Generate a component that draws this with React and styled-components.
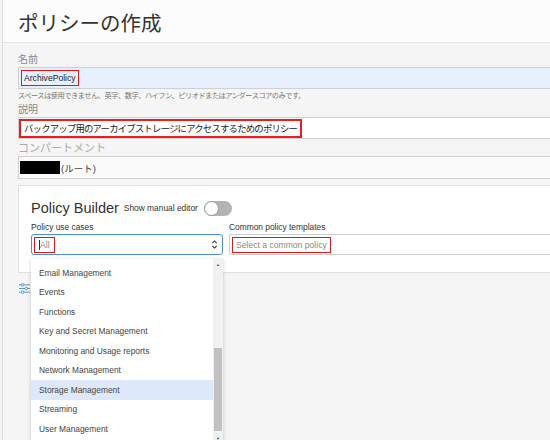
import React from 'react';
import styled, { createGlobalStyle } from 'styled-components';

const GlobalStyle = createGlobalStyle`
  html, body {
    margin: 0;
    padding: 0;
    width: 550px;
    height: 440px;
    overflow: hidden;
    background: #f5f5f5;
  }
  body {
    font-family: "Liberation Sans", Arial, "Noto Sans CJK JP", sans-serif;
    color: #333;
  }
`;

const useCases = [
  'Email Management',
  'Events',
  'Functions',
  'Key and Secret Management',
  'Monitoring and Usage reports',
  'Network Management',
  'Storage Management',
  'Streaming',
  'User Management',
];

const App = () => (
  <>
    <GlobalStyle />
    <Frame>
      <Header>
        <Title>ポリシーの作成</Title>
      </Header>
      <Body>
        <Label>名前</Label>
        <Input $tone="blue">
          <Mark $inset="2px" $pad="2px">ArchivePolicy</Mark>
        </Input>
        <Help>スペースは使用できません。英字、数字、ハイフン、ピリオドまたはアンダースコアのみです。</Help>
        <Label>説明</Label>
        <Input>
          <DescMark>バックアップ用のアーカイブストレージにアクセスするためのポリシー</DescMark>
        </Input>
        <Label $muted>コンパートメント</Label>
        <Input $tone="soft" $tall>
          <Redacted />
          <Compartment>(ルート)</Compartment>
        </Input>

        <Card>
          <CardHead>
            <CardTitle>Policy Builder</CardTitle>
            <SwitchLabel>Show manual editor</SwitchLabel>
            <Switch />
          </CardHead>
          <Fields>
            <Field $width="192px">
              <SmallLabel>Policy use cases</SmallLabel>
              <Select>
                <Mark $inset="2px" $pad="4px" $muted>
                  <Caret />All
                </Mark>
                <Chevron viewBox="0 0 8 12">
                  <path d="M1.5 4.5 L4 2 L6.5 4.5 M1.5 7.5 L4 10 L6.5 7.5" fill="none" stroke="#333" strokeWidth="1.2" />
                </Chevron>
              </Select>
              <Dropdown>
                <Options>
                  {useCases.map((c) => (
                    <Option key={c} $active={c === 'Storage Management'}>{c}</Option>
                  ))}
                </Options>
                <Scrollbar>
                  <ScrollArrow>▲</ScrollArrow>
                  <Track>
                    <Thumb />
                  </Track>
                  <ScrollArrow>▼</ScrollArrow>
                </Scrollbar>
              </Dropdown>
            </Field>
            <Field $grow>
              <SmallLabel>Common policy templates</SmallLabel>
              <TextBox>
                <Mark $inset="2px" $pad="3px" $muted>Select a common policy</Mark>
              </TextBox>
            </Field>
          </Fields>
        </Card>

        <Tools viewBox="0 0 12 12">
          <g stroke="#4a8fd8" strokeWidth="1" fill="none">
            <line x1="0" y1="2" x2="12" y2="2" />
            <line x1="0" y1="6" x2="12" y2="6" />
            <line x1="0" y1="10" x2="12" y2="10" />
          </g>
          <g fill="#fff" stroke="#4a8fd8" strokeWidth="1">
            <circle cx="4" cy="2" r="1.4" />
            <circle cx="8" cy="6" r="1.4" />
            <circle cx="4" cy="10" r="1.4" />
          </g>
        </Tools>
      </Body>
    </Frame>
  </>
);

const Frame = styled.div`
  margin-left: 2px;
  border-left: 1px solid #dcdcdc;
  min-height: 440px;
  width: 640px;
`;

const Header = styled.header`
  height: 42px;
  background: #fcfcfc;
  border-bottom: 1px solid #e4e4e4;
  padding-left: 15px;
  display: flex;
  align-items: center;
`;

const Title = styled.h1`
  margin: 0;
  font-size: 20.5px;
  font-weight: normal;
  color: #333;
  padding-top: 1px;
`;

const Body = styled.main`
  padding: 10px 0 0 15px;
  display: flex;
  flex-direction: column;
`;

const Label = styled.div`
  font-size: ${({ $muted }) => ($muted ? '11px' : '10px')};
  line-height: 14px;
  height: 14px;
  color: ${({ $muted }) => ($muted ? '#aaa' : '#888')};
  margin-bottom: ${({ $muted }) => ($muted ? '1px' : '0')};
`;

const Input = styled.div`
  height: ${({ $tall }) => ($tall ? '21px' : '20px')};
  border: 1px solid #d0d0d0;
  background: ${({ $tone }) => ($tone === 'blue' ? '#e8f0fe' : $tone === 'soft' ? '#fafafa' : '#fff')};
  display: flex;
  align-items: center;
  font-size: 10px;
  color: #333;
  gap: 1px;
  margin-bottom: ${({ $tall }) => ($tall ? '6px' : '2px')};
`;

const Mark = styled.span`
  margin-left: ${({ $inset }) => $inset};
  padding: 0 ${({ $pad }) => $pad};
  border: 1.5px solid #e4161c;
  box-sizing: border-box;
  height: 16px;
  display: flex;
  align-items: center;
  font-size: 8.6px;
  color: ${({ $muted }) => ($muted ? '#8a8a8a' : '#222')};
  white-space: nowrap;
`;

const DescMark = styled.span`
  box-sizing: border-box;
  height: 19px;
  padding: 0 3px;
  border-width: 2px;
  border-style: solid;
  border-color: #f01a1f;
  display: flex;
  align-items: center;
  font-size: 9.4px;
  letter-spacing: -0.8px;
  color: #222;
  white-space: nowrap;
`;

const Caret = styled.span`
  width: 1px;
  height: 10px;
  background: #333;
`;

const Help = styled.div`
  font-size: 7.2px;
  letter-spacing: -0.45px;
  line-height: 12px;
  color: #777;
  margin-top: -1px;
  margin-bottom: 1px;
`;

const Redacted = styled.span`
  width: 40px;
  height: 13px;
  background: #000;
  margin-left: 1px;
`;

const Compartment = styled.span`
  font-size: 9.5px;
  color: #444;
`;

const Card = styled.section`
  background: #fff;
  border: 1px solid #e0e0e0;
  padding: 11px 0 17px 12px;
  display: flex;
  flex-direction: column;
`;

const CardHead = styled.div`
  display: flex;
  align-items: center;
  height: 22px;
`;

const CardTitle = styled.h2`
  margin: 0;
  font-size: 14.5px;
  font-weight: normal;
  color: #333;
`;

const SwitchLabel = styled.span`
  font-size: 8.4px;
  color: #333;
  margin-left: 5px;
`;

const Switch = styled.span`
  position: relative;
  width: 28px;
  height: 15px;
  margin-left: 6px;
  border-radius: 8px;
  background: #b3b3b3;
  &::after {
    content: '';
    position: absolute;
    left: 0;
    top: 0;
    width: 13px;
    height: 13px;
    border: 1px solid #9a9a9a;
    border-radius: 50%;
    background: #fff;
  }
`;

const Fields = styled.div`
  display: flex;
  gap: 6px;
  margin-top: 2px;
`;

const Field = styled.div`
  position: relative;
  width: ${({ $width }) => $width || 'auto'};
  flex: ${({ $grow }) => ($grow ? 1 : 'none')};
  display: flex;
  flex-direction: column;
`;

const SmallLabel = styled.div`
  font-size: 8.4px;
  line-height: 13px;
  height: 13px;
  color: #333;
`;

const Select = styled.div`
  height: 19px;
  border: 1px solid #4a90e2;
  border-radius: 3px;
  display: flex;
  align-items: center;
  justify-content: space-between;
  padding-right: 4px;
`;

const Chevron = styled.svg`
  width: 7px;
  height: 11px;
`;

const TextBox = styled.div`
  height: 19px;
  border: 1px solid #ccc;
  border-radius: 2px;
  display: flex;
  align-items: center;
`;

const Dropdown = styled.div`
  position: absolute;
  top: calc(100% + 4px);
  left: 0;
  width: 192px;
  height: 184px;
  background: #fff;
  box-shadow: 0 1px 4px rgba(0, 0, 0, 0.2);
  display: flex;
  z-index: 2;
`;

const Options = styled.ul`
  list-style: none;
  margin: 0;
  padding: 4px 0 0 0;
  flex: 1;
`;

const Option = styled.li`
  height: 19.5px;
  display: flex;
  align-items: center;
  padding-left: 8px;
  font-size: 8.4px;
  color: #444;
  background: ${({ $active }) => ($active ? '#dde9fb' : 'transparent')};
`;

const Scrollbar = styled.div`
  width: 10px;
  background: #f1f1f1;
  display: flex;
  flex-direction: column;
`;

const ScrollArrow = styled.div`
  height: 10px;
  font-size: 4px;
  color: #555;
  display: flex;
  align-items: center;
  justify-content: center;
`;

const Track = styled.div`
  flex: 1;
  padding: 79px 1px 2px 1px;
  display: flex;
`;

const Thumb = styled.div`
  flex: 1;
  background: #c1c1c1;
`;

const Tools = styled.svg`
  width: 11px;
  height: 11px;
  margin-top: 10px;
  margin-left: 1px;
`;

export default App;
